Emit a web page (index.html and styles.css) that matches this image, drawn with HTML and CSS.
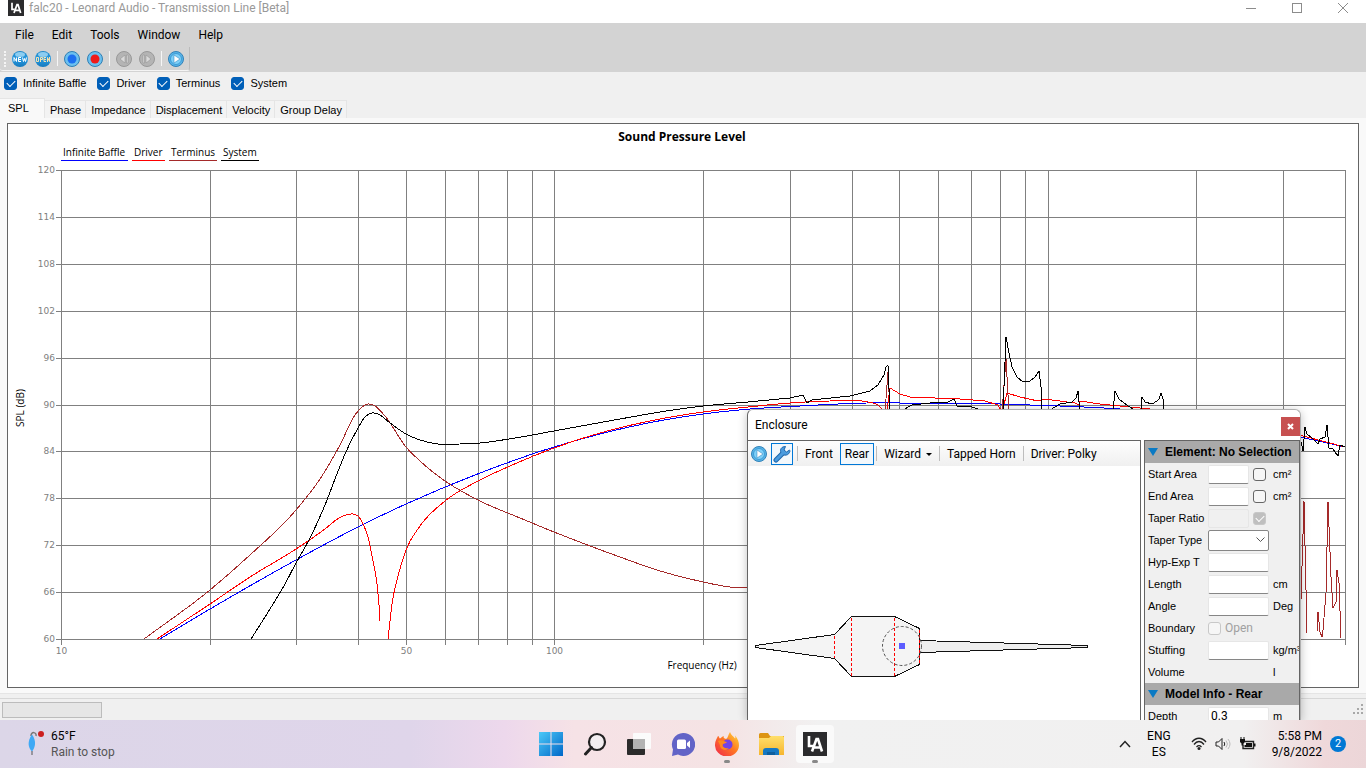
FILE: index.html
```html
<!DOCTYPE html>
<html lang="en">
<head>
<meta charset="UTF-8">
<meta name="viewport" content="width=device-width, initial-scale=1.0">
<title>falc20 - Leonard Audio - Transmission Line [Beta]</title>
<link rel="stylesheet" href="styles.css">
</head>
<body>
<svg width="0" height="0" class="defs" aria-hidden="true">
    <defs>
        <linearGradient id="ball" x1="0" y1="0" x2="0" y2="1">
            <stop offset="0" stop-color="#1c86c8"/><stop offset=".5" stop-color="#2a9ae0"/><stop offset="1" stop-color="#1479bd"/>
        </linearGradient>
        <linearGradient id="win" x1="0" y1="0" x2="1" y2="1">
            <stop offset="0" stop-color="#4cc9f8"/><stop offset="1" stop-color="#0067c8"/>
        </linearGradient>
        <linearGradient id="folder" x1="0" y1="0" x2="0" y2="1">
            <stop offset="0" stop-color="#ffdf6b"/><stop offset="1" stop-color="#f6b52e"/>
        </linearGradient>
        <linearGradient id="fox" x1="1" y1="0" x2="0" y2="1">
            <stop offset="0" stop-color="#ffe03c"/><stop offset=".45" stop-color="#ff7a22"/><stop offset="1" stop-color="#f0224e"/>
        </linearGradient>
        <symbol id="la" viewBox="0 0 24 24">
            <rect width="24" height="24" fill="#2b2b2d"/>
            <path d="M6 4v10h4" fill="none" stroke="#fff" stroke-width="2.6"/>
            <path d="M9 19.500l4.500-12.500h1.500l4 12.500M11 15.500h7" fill="none" stroke="#fff" stroke-width="2.600"/>
        </symbol>
        <symbol id="play" viewBox="0 0 16 16">
            <circle cx="8" cy="8" r="7.500" fill="#58b4e8" stroke="#3282b8"/>
            <circle cx="8" cy="8" r="5.500" fill="#7fd0f8" stroke="#3e9cd6"/>
            <path d="M6 4l6 4-6 4z" fill="#fff" stroke="#2b7fb8" stroke-width=".5"/>
        </symbol>
    </defs>
</svg>

<main class="app">
    <header class="titlebar">
        <svg class="logo" width="16" height="16"><use href="#la"/></svg>
        <span class="caption">falc20 - Leonard Audio - Transmission Line [Beta]</span>
        <button class="win-btn" aria-label="Minimize"><svg width="10" height="10"><path d="M0 5.500h10"/></svg></button>
        <button class="win-btn" aria-label="Maximize"><svg width="10" height="10"><rect x=".5" y=".5" width="9" height="9"/></svg></button>
        <button class="win-btn" aria-label="Close"><svg width="10" height="10"><path d="M0 0l10 10M10 0L0 10"/></svg></button>
    </header>

    <nav class="menubar">
        <button>File</button>
        <button>Edit</button>
        <button>Tools</button>
        <button>Window</button>
        <button>Help</button>
    </nav>

    <div class="toolbar-area">
        <div class="toolbar">
            <span class="grip"></span>
            <button aria-label="New"><svg width="16" height="16"><circle cx="8" cy="8" r="8" fill="url(#ball)"/><ellipse cx="8" cy="3.500" rx="5" ry="2.500" fill="#8dcdf0"/><path d="M2 10.500v-4l2.500 4v-4M9 6.500H6.500v4H9M6.500 8.500H9M10.500 6.500l1 4 1-3 1 3 1-4" fill="none" stroke="#fff"/></svg></button>
            <button aria-label="Open"><svg width="16" height="16"><circle cx="8" cy="8" r="8" fill="url(#ball)"/><ellipse cx="8" cy="3.500" rx="5" ry="2.500" fill="#8dcdf0"/><path d="M1.500 6.500h2v4h-2zM5.500 11V6.500h2v2h-2M11 6.500H9v4h2M9 8.500h2M12.500 11V6.500l2 4V6" fill="none" stroke="#f4e2b0"/></svg></button>
            <span class="sep"></span>
            <button aria-label="Blue trace"><svg width="16" height="16"><circle cx="8" cy="8" r="7.500" fill="#6cc0ef" stroke="#2f7fb4"/><circle cx="8" cy="8" r="4.500" fill="#1d6ff0"/></svg></button>
            <button aria-label="Record"><svg width="16" height="16"><circle cx="8" cy="8" r="7.500" fill="#6cc0ef" stroke="#2f7fb4"/><circle cx="8" cy="8" r="4.500" fill="#ef1a1a"/></svg></button>
            <span class="sep"></span>
            <button aria-label="Step back" disabled><svg width="16" height="16"><circle cx="8" cy="8" r="7.500" fill="#b4b4b4" stroke="#989898"/><path d="M9 4L4 8l5 4zM10.500 4v8h1.500V4z" fill="#dadada" stroke="#8d8d8d" stroke-width=".5"/></svg></button>
            <button aria-label="Step forward" disabled><svg width="16" height="16"><circle cx="8" cy="8" r="7.500" fill="#b4b4b4" stroke="#989898"/><path d="M7 4l5 4-5 4zM4 4v8h1.500V4z" fill="#dadada" stroke="#8d8d8d" stroke-width=".5"/></svg></button>
            <span class="sep"></span>
            <button aria-label="Run"><svg width="16" height="16"><use href="#play"/></svg></button>
        </div>
    </div>

    <div class="traces">
        <label><input type="checkbox" checked>Infinite Baffle</label>
        <label><input type="checkbox" checked>Driver</label>
        <label><input type="checkbox" checked>Terminus</label>
        <label><input type="checkbox" checked>System</label>
    </div>

    <div class="tabs" role="tablist">
        <button class="active" role="tab" aria-selected="true">SPL</button>
        <button role="tab">Phase</button>
        <button role="tab">Impedance</button>
        <button role="tab">Displacement</button>
        <button role="tab">Velocity</button>
        <button role="tab">Group Delay</button>
    </div>

    <section class="tab-page">
        <svg class="chart" viewBox="8 124 1350 563" preserveAspectRatio="none">
            <text class="chart-title" x="682" y="141" text-anchor="middle">Sound Pressure Level</text>
            <g class="legend">
                <text x="63" y="156">Infinite Baffle</text>
                <text x="134" y="156">Driver</text>
                <text x="171" y="156">Terminus</text>
                <text x="223" y="156">System</text>
                <path class="baffle" d="M61 160.500h67"/>
                <path class="driver" d="M132 160.500h33"/>
                <path class="terminus" d="M169 160.500h48"/>
                <path class="system" d="M221 160.500h38"/>
            </g>
            <g id="grid"></g>
            <g id="curves"></g>
            <text class="axis-name" x="702" y="669" text-anchor="middle">Frequency (Hz)</text>
            <text class="axis-name" transform="translate(24 408) rotate(-90)" text-anchor="middle">SPL (dB)</text>
        </svg>
    </section>

    <footer class="statusbar">
        <div class="progress" role="progressbar" aria-label="Progress"></div>
        <svg width="12" height="12" class="size-grip"><path d="M9 0h2v2H9zM5 4h2v2H5zM9 4h2v2H9zM1 8h2v2H1zM5 8h2v2H5zM9 8h2v2H9z" fill="#a8a8a8"/></svg>
    </footer>

    <section class="enclosure">
        <div class="enc-title">
            <span>Enclosure</span>
            <button class="enc-close" aria-label="Close"><svg width="7" height="7"><path d="M1 1l5 5M6 1L1 6" stroke="#fff" stroke-width="2"/></svg></button>
        </div>
        <div class="enc-body">
            <div class="enc-view">
                <div class="enc-tools">
                    <button class="icon" aria-label="Run"><svg width="16" height="16"><use href="#play"/></svg></button>
                    <button class="icon on" aria-label="Settings"><svg width="18" height="18"><path d="M3 15l7-7" stroke="#1f67ab" stroke-width="5" stroke-linecap="round"/><path d="M16.500 5l-3 2-2.500-2 1.500-3.500c-4 0-6 3-4.500 6s6.500 4 8.500 0c.6-1 .4-2 0-2.500z" fill="#4a9bde" stroke="#1f67ab"/><path d="M3 15l7-7" stroke="#4a9bde" stroke-width="3" stroke-linecap="round"/></svg></button>
                    <span class="sep"></span>
                    <button>Front</button>
                    <button class="on">Rear</button>
                    <span class="sep"></span>
                    <button>Wizard <span class="caret"></span></button>
                    <span class="sep"></span>
                    <button>Tapped Horn</button>
                    <span class="sep"></span>
                    <button>Driver: Polky</button>
                </div>
                <svg class="cabinet" width="392" height="254" viewBox="748 466 392 254">
                    <g fill="#f4f4f4" stroke="#111" shape-rendering="crispEdges">
                        <path d="M755.500 645.500L834.500 634.500L851.500 616.500H894.500L919.500 628.500V664.500L894.500 676.500H851.500L834.500 658.500L755.500 647.500z"/>
                        <path d="M919.500 640.500L1087.500 645.500V647.500L919.500 652.500z" fill="#eee"/>
                    </g>
                    <g fill="none" stroke-dasharray="3 2">
                        <path class="driver" d="M834.500 636v22M851.500 618v58M894.500 618v58M919.500 630v34"/>
                        <circle cx="902" cy="646" r="19.500" stroke="#555"/>
                    </g>
                    <rect x="899" y="643" width="6" height="6" fill="#5c5cff"/>
                </svg>
            </div>
            <form class="props">
                <h2><i class="tri"></i>Element: No Selection</h2>
                <div class="row"><label for="start">Start Area</label><div class="field"><input type="text" id="start" class="short"><input type="checkbox" aria-label="Lock start area"></div><span>cm²</span></div>
                <div class="row"><label for="end">End Area</label><div class="field"><input type="text" id="end" class="short"><input type="checkbox" aria-label="Lock end area"></div><span>cm²</span></div>
                <div class="row"><label for="ratio">Taper Ratio</label><div class="field"><input type="text" id="ratio" class="short" disabled><input type="checkbox" aria-label="Lock taper ratio" checked disabled></div></div>
                <div class="row"><label for="taper">Taper Type</label><div class="field"><select id="taper"><option></option></select></div></div>
                <div class="row"><label for="hyp">Hyp-Exp T</label><div class="field"><input type="text" id="hyp"></div></div>
                <div class="row"><label for="length">Length</label><div class="field"><input type="text" id="length"></div><span>cm</span></div>
                <div class="row"><label for="angle">Angle</label><div class="field"><input type="text" id="angle"></div><span>Deg</span></div>
                <div class="row"><label for="open">Boundary</label><div class="field"><input type="checkbox" id="open" disabled><label for="open" class="off">Open</label></div></div>
                <div class="row"><label for="stuffing">Stuffing</label><div class="field"><input type="text" id="stuffing"></div><span>kg/m³</span></div>
                <div class="row"><span class="name">Volume</span><div class="field"></div><span>l</span></div>
                <h2><i class="tri"></i>Model Info - Rear</h2>
                <div class="row"><label for="depth">Depth</label><div class="field"><input type="text" id="depth" value="0.3"></div><span>m</span></div>
            </form>
        </div>
    </section>
</main>

<footer class="taskbar">
    <button class="weather">
        <svg width="18" height="26"><path d="M4 5c0-5 6-4 5 0" fill="none" stroke="#777" stroke-width="1.500"/><path d="M5 3.500c5 7 3 13 0 17-4-4-5-10 0-17z" fill="#3fa9f5"/><path d="M5 20v4" stroke="#555"/><circle cx="14" cy="3" r="3" fill="#cc1f1f"/></svg>
        <span>65°F<br><small>Rain to stop</small></span>
    </button>
    <div class="apps">
        <button aria-label="Start"><svg width="24" height="24"><path d="M0 0h11.500v11.500H0zM12.500 0H24v11.500H12.500zM0 12.500h11.500V24H0zM12.500 12.500H24V24H12.500z" fill="url(#win)"/></svg></button>
        <button aria-label="Search"><svg width="24" height="24"><circle cx="14" cy="10" r="8" fill="#f2eef0" stroke="#222" stroke-width="2.200"/><path d="M8.500 15.500L2.500 22" stroke="#222" stroke-width="3" stroke-linecap="round"/></svg></button>
        <button aria-label="Task view"><svg width="24" height="24"><rect y="7" width="18" height="16" rx="1" fill="#2b2b2b"/><rect x="6" y="1" width="18" height="16" rx="1" fill="#fbfbfb"/><path d="M6 7h12v10H6z" fill="#b3b3b3"/></svg></button>
        <button aria-label="Chat"><svg width="24" height="24"><path d="M12 1a11.500 11.500 0 1 1-5 21.500L1 24l1-6.500A11.500 11.500 0 0 1 12 1z" fill="#6264c7"/><rect x="6" y="7.500" width="9" height="9.500" rx="1.500" fill="#fff"/><path d="M16 11l3-2.500v7.500L16 13.500z" fill="#fff"/></svg></button>
        <button aria-label="Firefox" class="running"><svg width="24" height="24"><path d="M15 0c1 3 3 4 5 6.500 1-.5 0-2 0-3 3 3 4 7 4 10A12 11.500 0 0 1 0 12.500C0 9 2 6 3 4c1 0 1 2 2 2.500C6 6 7 4.500 9 4c-1 1.500 0 2.500 2 3C13 6 13 3 15 0z" fill="url(#fox)"/><circle cx="12.500" cy="12.500" r="5" fill="#7542e5"/><path d="M3 9c4-2 6 1 9 1-1 2-4 1-4.500 3S11 17 14 16c-4 4-9 1-9-3z" fill="#ff8a1e"/></svg></button>
        <button aria-label="File Explorer"><svg width="25" height="24"><path d="M0 2.500A1.500 1.500 0 0 1 1.500 1H9l2 3h14v4H0z" fill="#dd9412"/><path d="M0 6h10l2-2h11.500A1.500 1.500 0 0 1 25 5.500V23H0z" fill="url(#folder)"/><path d="M4 23v-4a3 3 0 0 1 3-3h10a3 3 0 0 1 3 3v4z" fill="#1678c2"/><path d="M8 20h8v3H8z" fill="#0f5f9e"/></svg></button>
        <button aria-label="Leonard Audio" class="running current"><svg width="24" height="24"><use href="#la"/></svg></button>
    </div>
    <div class="tray">
        <button aria-label="Show hidden icons"><svg width="12" height="8"><path d="M1 7l5-5.500L11 7" fill="none" stroke="#222" stroke-width="1.500"/></svg></button>
        <button class="lang">ENG<br>ES</button>
        <button class="status" aria-label="Network, volume, battery">
            <svg width="16" height="14" fill="none" stroke="#222"><path d="M1 5c4-5 10-5 14 0M3 7.500c3-4 7-4 10 0M5.500 10c2-2 3-2 5 0" stroke-width="1.300"/><circle cx="8" cy="11.500" r="1.500" fill="#222" stroke="none"/></svg>
            <svg width="16" height="14" fill="none" stroke="#222"><path d="M1 5h2.500L7 1.500v11L3.500 9H1zM9 5q1.500 2 0 4"/><path d="M11 3.500q3 3.500 0 7M13 2q4 5 0 10" stroke="#bbb"/></svg>
            <svg width="17" height="14"><path d="M6 4.500h8.500v7H4V8" fill="none" stroke="#222" stroke-width="1.400"/><path d="M7 6h6v4H5.500V8H7zM15 6.500h1.500v3H15zM1 2h5v3L4.500 6.500v2h-2v-2L1 5zM1.500 0h1v2h-1zM4.500 0h1v2h-1z" fill="#111"/></svg>
        </button>
        <button class="clock">5:58 PM<br>9/8/2022</button>
        <span class="badge">2</span>
    </div>
</footer>
<script src="chart.js"></script>
</body>
</html>
```
FILE: styles.css
```css
* {
    box-sizing: border-box;
}
body {
    margin: 0;
    height: 100vh;
    display: flex;
    flex-direction: column;
    overflow: hidden;
    background: #f0f0f0;
    color: #000;
    font-family: Roboto, "Noto Sans", sans-serif;
    font-size: 12px;
}
button {
    border: 0;
    padding: 0;
    background: none;
    font: inherit;
    color: inherit;
    white-space: nowrap;
}
svg {
    display: block;
}
.defs {
    position: absolute;
}
.app {
    position: relative;
    flex: 1;
    min-height: 0;
    display: flex;
    flex-direction: column;
    overflow: hidden;
}

/* title, menu and tool bars */
.titlebar {
    height: 23px;
    display: flex;
    align-items: center;
    background: #fff;
    color: #999;
    padding: 0 0 8px 8px;
}
.caption {
    flex: 1;
    margin-left: 5px;
}
.win-btn {
    width: 46px;
    height: 15px;
    display: grid;
    place-items: center;
}
.win-btn svg {
    fill: none;
    stroke: #8c8c8c;
}
.menubar {
    height: 24px;
    padding-left: 6px;
    display: flex;
    background: #d3d3d3;
}
.menubar button {
    padding: 0 9px;
}
.toolbar-area {
    height: 25px;
    background: #d3d3d3;
}
.toolbar {
    width: 190px;
    height: 24px;
    display: flex;
    align-items: center;
    gap: 7px;
    padding-left: 4px;
    border-bottom: 1px solid #f4f4f4;
    border-right: 1px solid #bbb;
    border-radius: 0 0 3px 3px;
}
.grip {
    width: 2px;
    height: 16px;
    margin-right: -1px;
    border-left: 2px dotted #f4f4f4;
}
.sep {
    width: 1px;
    height: 15px;
    margin: 0 -1px;
    background: #f6f6f6;
}

/* trace check boxes */
.traces,
.tabs,
.props {
    font-family: "Liberation Sans", sans-serif;
    font-size: 11px;
}
.traces {
    height: 26px;
    display: flex;
    align-items: center;
    gap: 11px;
    padding: 0 4px 4px;
}
.traces label {
    display: flex;
    align-items: center;
    gap: 6px;
}
input[type="checkbox"] {
    appearance: none;
    width: 13px;
    height: 13px;
    margin: 0;
    flex: none;
    border: 1px solid #666;
    border-radius: 3px;
    background: #f6f6f6;
    display: grid;
    place-items: center;
}
input[type="checkbox"]:checked {
    background: #005fb8;
    border-color: #005fb8;
}
input[type="checkbox"]:checked::after {
    content: "";
    width: 7px;
    height: 4px;
    margin-top: -2px;
    border-left: 1px solid #fff;
    border-bottom: 1px solid #fff;
    transform: rotate(-45deg);
}
input[type="checkbox"]:disabled {
    border-color: #c8c8c8;
}
input[type="checkbox"]:checked:disabled {
    background: #bfbfbf;
}

/* tabs */
.tabs {
    height: 20px;
    display: flex;
    align-items: flex-end;
}
.tabs button {
    height: 18px;
    padding: 0 4px 0 5px;
    border: 1px solid #e5e5e5;
    border-width: 1px 1px 0 0;
    background: #f3f3f3;
}
.tabs .active {
    height: 20px;
    width: 45px;
    padding: 0 8px 2px;
    text-align: left;
    background: #f9f9f9;
}
.tab-page {
    flex: 1;
    min-height: 0;
    padding: 5px 7px;
    margin-bottom: 4px;
    background: #f9f9f9;
    border-bottom: 1px solid #e5e5e5;
}
.chart {
    width: 100%;
    height: 100%;
    background: #fff;
    border: 1px solid #646464;
}
.chart text {
    font-family: "Open Sans", sans-serif;
    font-size: 10px;
}
.chart .chart-title {
    font-size: 12px;
    font-weight: bold;
}
.chart path {
    fill: none;
    shape-rendering: crispEdges;
}
.grid-line {
    stroke: #808080;
}
.chart .tick {
    font-family: "DejaVu Sans", sans-serif;
    font-size: 9px;
    fill: #808080;
}
.baffle {
    stroke: #0000ff;
}
.driver {
    stroke: #ff0000;
}
.terminus {
    stroke: #a52a2a;
}
.system {
    stroke: #000;
}

.statusbar {
    height: 22px;
    display: flex;
    justify-content: space-between;
    align-items: center;
    padding: 0 2px;
    border-top: 1px solid #d7d7d7;
}
.progress {
    width: 100px;
    height: 16px;
    background: #e6e6e6;
    border: 1px solid #bcbcbc;
}

/* floating enclosure window, runs on behind the taskbar */
.enclosure {
    position: absolute;
    top: 409px;
    right: 65px;
    bottom: 0;
    width: 554px;
    display: flex;
    flex-direction: column;
    overflow: hidden;
    background: #fff;
    border: 1px solid #b0b0b0;
    border-left-color: #646464;
    border-bottom: 0;
    border-radius: 6px 6px 0 0;
    box-shadow: 0 2px 10px rgba(0, 0, 0, 0.25);
}
.enc-title {
    height: 30px;
    flex: none;
    display: flex;
    align-items: center;
    justify-content: space-between;
    padding-left: 7px;
}
.enc-close {
    width: 19px;
    height: 19px;
    margin-top: 3px;
    display: grid;
    place-items: center;
    background: #c75050;
}
.enc-body {
    flex: 1;
    min-height: 0;
    display: flex;
    gap: 3px;
}
.enc-view {
    flex: 1;
    min-width: 0;
    overflow: hidden;
    border-top: 1px solid #646464;
    border-right: 1px solid #646464;
}
.enc-tools {
    height: 25px;
    display: flex;
    align-items: center;
    gap: 2px;
    padding-left: 3px;
    background: linear-gradient(#fdfdfd, #f0f0f0);
}
.enc-tools button {
    height: 22px;
    padding: 0 4px;
    border: 1px solid transparent;
}
.enc-tools .icon {
    padding: 0 1px;
    margin-right: 2px;
}
.enc-tools button:first-child {
    padding: 0;
    border: 0;
    height: 16px;
}
.enc-tools .on {
    border-color: #0078d7;
    background: #f3f8fc;
}
.enc-tools .sep {
    margin: 0;
    background: #bdbdbd;
}
.caret {
    display: inline-block;
    margin: 0 0 2px 2px;
    border: 3px solid transparent;
    border-top-color: #000;
    border-bottom: 0;
}

/* property panel */
.props {
    width: 156px;
    overflow: hidden;
    background: #f0f0f0;
    border: 1px solid #646464;
    border-bottom: 0;
}
.props h2 {
    height: 22px;
    margin: 0;
    padding-left: 3px;
    display: flex;
    align-items: center;
    gap: 7px;
    background: #a9a9a9;
    font-size: 12px;
    white-space: nowrap;
}
.tri {
    border: 5px solid transparent;
    border-top: 8px solid #0a7ac4;
    border-bottom: 0;
}
.row {
    height: 22px;
    display: flex;
    align-items: center;
    padding-left: 3px;
    white-space: nowrap;
}
.row > label,
.row .name {
    width: 60px;
    flex: none;
}
.field {
    width: 65px;
    flex: none;
    display: flex;
    align-items: center;
    gap: 4px;
}
.field input[type="text"],
.field select {
    width: 61px;
    height: 19px;
    padding: 0 2px;
    border: 1px solid #e6e6e6;
    border-bottom-color: #868686;
    border-radius: 2px;
    background: #fff;
    font: 12px Roboto, sans-serif;
}
.field .short[type="text"] {
    width: 41px;
}
.field input[type="text"]:disabled {
    background: #f0f0f0;
    border-color: #e6e6e6;
}
.field select {
    appearance: none;
    height: 21px;
    border-color: #868686;
    background: #fff url("data:image/svg+xml,%3Csvg xmlns='http://www.w3.org/2000/svg' width='9' height='6'%3E%3Cpath d='M.5 .5l4 4 4-4' fill='none' stroke='%23555'/%3E%3C/svg%3E") no-repeat right 3px center;
}
.off {
    color: #a0a0a0;
    font: 12px Roboto, sans-serif;
}

/* taskbar */
.taskbar {
    height: 48px;
    flex: none;
    display: grid;
    grid-template-columns: 1fr auto 1fr;
    align-items: center;
    background: linear-gradient(90deg, #dcd6e8 0, #dfd5ea 30%, #edd8ec 37%, #f6e2e6 42%, #f5e3e4 53%, #f1f1f1 60%, #f1f0f0 91%, #efd8da 97%, #ecd6d8);
    line-height: 16px;
}
.weather {
    justify-self: start;
    display: flex;
    align-items: center;
    gap: 6px;
    padding-left: 27px;
    text-align: left;
}
.weather small {
    font-size: 12px;
    color: #555;
}
.apps {
    display: flex;
    gap: 6px;
}
.apps button {
    position: relative;
    width: 38px;
    height: 38px;
    display: grid;
    place-items: center;
    border-radius: 4px;
}
.apps .current {
    background: #fafafa;
}
.running::after {
    content: "";
    position: absolute;
    bottom: 0;
    left: 16px;
    width: 6px;
    height: 3px;
    border-radius: 2px;
    background: #888;
}
.tray {
    justify-self: end;
    display: flex;
    align-items: center;
    padding-right: 20px;
}
.lang {
    margin: 0 20px 0 16px;
}
.status {
    display: flex;
    gap: 8px;
}
.clock {
    margin: 0 8px 0 16px;
    text-align: right;
}
.badge {
    width: 16px;
    height: 16px;
    border-radius: 50%;
    background: #0078d4;
    color: #fff;
    font-size: 11px;
    text-align: center;
}
```
FILE: chart.js
```js
const NS = 'http://www.w3.org/2000/svg';
const left = 61, right = 1345, top_ = 170, bottom = 639;
const grid = document.getElementById('grid');
const curves = document.getElementById('curves');

function add(parent, name, attrs, text) {
    const el = document.createElementNS(NS, name);
    for (const key in attrs) el.setAttribute(key, attrs[key]);
    if (text) el.textContent = text;
    parent.appendChild(el);
}

// log frequency axis, 10 Hz to 4 kHz
for (let decade = 10; decade <= 1000; decade *= 10) {
    for (let n = 1; n < 10; n++) {
        const f = decade * n;
        if (f > 4000) break;
        const x = Math.min(right, Math.round(left + Math.log10(f / 10) * 493.45)) + 0.5;
        add(grid, 'path', {class: 'grid-line', d: `M${x} ${top_}V${bottom + 6}`});
        if ([10, 50, 100, 500, 1000].includes(f)) {
            add(grid, 'text', {class: 'tick', x: x, y: 654, 'text-anchor': 'middle'}, String(f));
        }
    }
}
for (let db = 60; db <= 120; db += 6) {
    const y = Math.round(bottom - (db - 60) * 7.815) + 0.5;
    add(grid, 'path', {class: 'grid-line', d: `M56 ${y}H${right + 1}`});
    add(grid, 'text', {class: 'tick', x: 55, y: y + 2, 'text-anchor': 'end'}, String(db));
}

// smooth line through the points, slope taken from both neighbours
function smooth(p) {
    const m = p.map((b, i) => {
        const a = p[i - 1], c = p[i + 1];
        if (!a) return (c[1] - b[1]) / (c[0] - b[0]);
        if (!c) return (b[1] - a[1]) / (b[0] - a[0]);
        const h0 = b[0] - a[0], h1 = c[0] - b[0];
        const s0 = (b[1] - a[1]) / h0, s1 = (c[1] - b[1]) / h1;
        return (s0 * h1 + s1 * h0) / (h0 + h1);
    });
    let d = `M${p[0]}`;
    for (let i = 1; i < p.length; i++) {
        const b = p[i - 1], c = p[i], h = (c[0] - b[0]) / 3;
        d += `C${b[0] + h} ${b[1] + m[i - 1] * h} ${c[0] - h} ${c[1] - m[i] * h} ${c[0]} ${c[1]}`;
    }
    return d;
}

function draw(cls, data, straight) {
    const p = data.split(' ').map(s => s.split(',').map(Number));
    add(curves, 'path', {class: cls, d: straight ? 'M' + p.join('L') : smooth(p)});
}

draw('baffle', '160,639 210,609 296,560 358,527 406,504 480,473 554,447 600,434 648,423 703,414 750,409 800,406 867,403 900,403 1000,404 1060,406 1120,409 1200,417 1300,437 1345,447');

draw('driver', '157,639 210,604 250,577 296,549 325,529 339,518 346,515 353,514 359,517 364,526 368,537 373,561 377,584 379,605 380,621');
draw('driver', '388,639 392,604 398,576 406,550 420,526 445,501 480,480 510,466 554,448 600,433 650,421 703,412 748,407 790,403 830,401 868,402 878,405 883,410');
draw('driver', '887,410 890,388 900,394 910,397 960,399 985,401 998,405 1002,412 1007,393 1020,397 1038,401 1044,399 1075,403 1079,405 1080,401 1100,404 1150,409 1200,416 1303,436 1345,447', true);

draw('terminus', '144,639 210,590 250,555 296,510 320,479 340,445 355,415 362,407 368,404 375,406 385,416 406,447 420,461 445,481 480,501 520,518 554,532 620,557 660,571 703,582 730,587 748,588');
draw('terminus', '885,412 888,372 890,412', true);
draw('terminus', '1002,412 1006,359 1009,412', true);
draw('terminus', '1300,632 1304,501 1307,633', true);
draw('terminus', '1317,631 1318,612 1320,632 1322,637 1323,630 1326,593 1328,502 1331,577 1333,608 1336,602 1337,570 1339,583 1341,638', true);

draw('system', '251,639 270,609 285,584 296,563 310,538 325,505 335,479 345,454 358,428 365,417 372,413 378,414 390,423 406,434 420,440 438,444 460,444 480,443 515,438 554,431 620,419 660,412 703,406 748,402');
draw('system', '748,402 790,398 803,395 807,403 812,400 850,396 870,391 878,385 884,375 886,367 888,365 890,412', true);
draw('system', '903,410 912,405 930,403 948,402 954,399 957,406 972,407 981,410', true);
draw('system', '1003,412 1006,337 1009,353 1012,367 1017,377 1023,382 1030,381 1035,377 1039,371 1041,387 1042,412', true);
draw('system', '1050,410 1060,404 1072,402 1076,398 1078,391 1080,412', true);
draw('system', '1113,412 1115,391 1119,399 1128,406 1135,410', true);
draw('system', '1141,412 1142,397 1145,402 1152,404 1157,401 1159,399 1161,393 1163,399 1164,412', true);
draw('system', '1300,437 1303,451 1305,427 1307,434 1312,438 1315,441 1318,444 1320,439 1325,437 1327,425 1329,448 1333,449 1335,452 1338,456 1340,445 1345,447', true);
```
